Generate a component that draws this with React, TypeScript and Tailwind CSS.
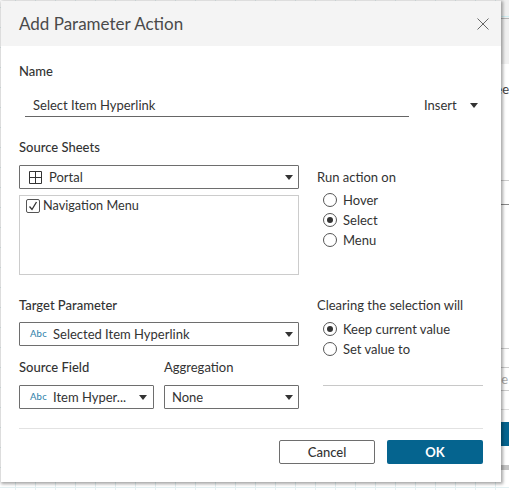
import { ReactNode } from 'react'

function Caret({ className = '' }: { className?: string }) {
  return (
    <svg width="8" height="5" viewBox="0 0 8 5" className={className}>
      <path d="M0 0h8L4 5z" fill="#333333" />
    </svg>
  )
}

function AbcIcon() {
  return <span className="w-[16px] text-[9.5px] leading-none tracking-[0.2px] text-[#2a7da8]">Abc</span>
}

function Select({ icon, label, className = '' }: { icon?: ReactNode; label: string; className?: string }) {
  return (
    <div className={`flex h-6 items-center rounded-[1px] border border-[#6e6e6e] bg-white pr-[5px] ${className}`}>
      <div className="flex min-w-0 flex-1 items-center">{icon}{label && <span className="truncate">{label}</span>}</div>
      <Caret />
    </div>
  )
}

function Radio({ label, checked = false }: { label: string; checked?: boolean }) {
  return (
    <div className="flex h-5 items-center gap-[6px] pl-[6px]">
      <span className="flex size-[14px] items-center justify-center rounded-full border border-[#555555]">
        {checked && <span className="size-[6px] rounded-full bg-[#333333]" />}
      </span>
      <span>{label}</span>
    </div>
  )
}

export default function App() {
  return (
    <div className="relative h-[490px] w-[509px] overflow-hidden bg-white bg-[linear-gradient(to_right,#e3f0f2_1px,transparent_1px),linear-gradient(to_bottom,#e3f0f2_1px,transparent_1px)] bg-[size:20px_20px] bg-[position:15px_7px] font-['Lato',sans-serif] text-[13px] leading-5 text-[#333333]">
      {/* bits of the page behind the dialog */}
      <div className="absolute top-0 right-0 h-[64px] w-[8px] bg-[#f0f0f0]" />
      <div className="absolute top-[16px] right-0 h-px w-[8px] bg-[#cfeef2]" />
      <div className="absolute top-[18px] right-0 h-px w-[8px] bg-[#b5b5b5]" />
      <div className="absolute top-[64px] right-0 h-[402px] w-[8px] bg-white" />
      <div className="absolute top-[79px] right-0 text-[#444444]">ee</div>
      <div className="absolute top-[180px] right-0 h-px w-[8px] bg-[#cccccc]" />
      <div className="absolute top-[204px] right-0 h-px w-[8px] bg-[#888888]" />
      <div className="absolute top-[348px] right-0 h-px w-[8px] bg-[#cccccc]" />
      <div className="absolute top-[367px] right-0 h-px w-[8px] bg-[#cccccc]" />
      <div className="absolute top-[369px] right-[1px] text-[#aaaaaa]">e</div>
      <div className="absolute top-[390px] right-0 h-px w-[8px] bg-[#cccccc]" />
      <div className="absolute top-[409px] right-0 h-px w-[8px] bg-[#dddddd]" />
      <div className="absolute top-[422px] right-0 h-[24px] w-[8px] bg-[#05648f]" />
      <div className="absolute top-[465px] right-0 h-[5px] w-[8px] bg-[#c4c4c4]" />

      <div className="relative ml-px mt-px h-[481px] w-[500px] bg-white shadow-[1px_1px_3px_1px_rgba(0,0,0,0.35)]">
        <div className="flex h-[45px] items-center justify-between bg-[#f4f4f4] pl-[18px] pr-[12px]">
          <span className="text-[17px] text-[#4a4a4a]">Add Parameter Action</span>
          <svg width="12" height="12" viewBox="0 0 12 12">
            <path d="M0.5 0.5l11 11M11.5 0.5l-11 11" stroke="#666666" fill="none" />
          </svg>
        </div>

        <div className="flex flex-col px-[18px]">
          <div className="mt-[15px] font-medium">Name</div>
          <div className="mt-[14px] flex items-start">
            <div className="ml-[6px] h-[22px] w-[384px] border-b border-[#666666] pl-[8px]">Select Item Hyperlink</div>
            <div className="ml-[15px] flex items-center">
              <span className="w-[46px]">Insert</span>
              <Caret className="mt-px" />
            </div>
          </div>

          <div className="mt-[20px] font-medium">Source Sheets</div>
          <div className="mt-[8px] grid grid-cols-[280px_1fr] gap-x-[18px]">
            <div>
              <Select
                label="Portal"
                icon={
                  <svg width="13" height="13" viewBox="0 0 13 13" className="ml-[9px] mr-[7px]">
                    <path d="M.5.5h12v12H.5zM6.5.5v12M.5 6.5h12" stroke="#333333" fill="none" />
                  </svg>
                }
              />
              <div className="mt-[6px] h-[80px] border border-[#cccccc] pl-[6px]">
                <div className="flex items-center gap-[3px]">
                  <span className="flex size-[14px] items-center justify-center rounded-[2px] border border-[#555555]">
                    <svg width="10" height="10" viewBox="0 0 10 10">
                      <path d="M1.5 5.5l2.5 3L8.5 1" stroke="#333333" strokeWidth="1.3" fill="none" />
                    </svg>
                  </span>
                  <span className="text-[12.7px] leading-[18px] pb-[2px]">Navigation Menu</span>
                </div>
              </div>
            </div>
            <div className="pt-[2px]">
              <div>Run action on</div>
              <div className="mt-[3px]">
                <Radio label="Hover" />
                <Radio label="Select" checked />
                <Radio label="Menu" />
              </div>
            </div>
          </div>

          <div className="mt-[20px] grid grid-cols-[280px_1fr] gap-x-[18px]">
            <div>
              <div className="font-medium">Target Parameter</div>
              <Select
                className="mt-[7px]"
                label="Selected Item Hyperlink"
                icon={<span className="ml-[10px] mr-[7px] flex"><AbcIcon /></span>}
              />
              <div className="mt-[11px] grid grid-cols-[135px_135px] gap-x-[10px]">
                <div>
                  <div className="font-medium">Source Field</div>
                  <Select
                    className="mt-[8px] pr-[6px]"
                    label="Item Hyper..."
                    icon={<span className="ml-[10px] mr-[7px] flex"><AbcIcon /></span>}
                  />
                </div>
                <div>
                  <div>Aggregation</div>
                  <Select className="mt-[8px] pl-[7px]" label="None" />
                </div>
              </div>
            </div>
            <div>
              <div>Clearing the selection will</div>
              <div className="mt-[4px]">
                <Radio label="Keep current value" checked />
                <Radio label="Set value to" />
              </div>
              <div className="ml-[6px] mt-[26px] h-px w-[160px] bg-[#c8c8c8]" />
            </div>
          </div>

          <div className="mt-[19px] h-px w-[464px] bg-[#e2e2e2]" />
          <div className="mt-[11px] flex justify-end gap-[12px]">
            <button className="h-6 w-[96px] rounded-[2px] border border-[#6e6e6e] font-medium">Cancel</button>
            <button className="h-6 w-[96px] rounded-[2px] bg-[#05648f] font-bold text-white">OK</button>
          </div>
        </div>
      </div>
    </div>
  )
}
